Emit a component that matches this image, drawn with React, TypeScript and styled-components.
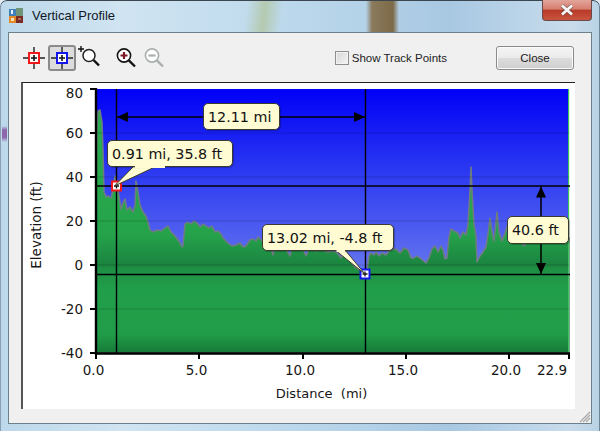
import React from "react";
import styled, { createGlobalStyle } from "styled-components";

const Global = createGlobalStyle`
  html, body { margin: 0; padding: 0; background: #dfeaf3; }
  #root { width: 600px; height: 431px; overflow: hidden; }
`;

const Frame = styled.div`
  position: relative;
  width: 600px;
  height: 431px;
  box-sizing: border-box;
  display: flex;
  flex-direction: column;
  padding: 0 8px 7px 8px;
  border-radius: 7px 7px 0 0;
  box-shadow: inset 0 1px 0 #3b4650, inset 1px 0 0 #8aa0b0, inset -1px 0 0 #6f8596;
  background:
    linear-gradient(transparent, #8d66ac 25%, #8d66ac 70%, transparent) 2px 126px / 5px 16px no-repeat,
    linear-gradient(97deg, transparent 41%, rgba(175, 195, 150, 0.7) 44%, transparent 47%) 0 0 / 100% 32px no-repeat,
    linear-gradient(90deg, transparent 61%, #8a7a5c 62%, #7d6a48 65.5%, transparent 66.5%) 0 0 / 100% 32px no-repeat,
    linear-gradient(90deg, #bcd8ea 0%, #d0e4f2 20%, #c2dcee 40%, #b4d2e8 60%, #a8c8e2 75%, #c8dcec 95%, #b8d2e4 100%);
`;

const TitleBar = styled.div`
  height: 32px;
  flex: none;
  display: flex;
  align-items: center;
  gap: 9px;
  padding: 0 0 1px 1px;
  box-sizing: border-box;
  font: 13px "Liberation Sans", Arial, sans-serif;
  color: #10181f;
`;

const CloseCaption = styled.div`
  position: absolute;
  top: 0;
  right: 8px;
  width: 50px;
  height: 21px;
  box-sizing: border-box;
  border: 1px solid #6a4a48;
  border-top: none;
  border-radius: 0 0 4px 4px;
  display: flex;
  align-items: center;
  justify-content: center;
  background: linear-gradient(#e2a59a 0%, #d67f70 45%, #b83a28 52%, #c9553f 100%);
`;

const Client = styled.div`
  flex: 1;
  min-height: 0;
  position: relative;
  display: flex;
  flex-direction: column;
  background: #f0f0f0;
  border: 1px solid #6e7f8c;
  box-sizing: border-box;
  padding: 0 16px 14px 12px;
`;

const Toolbar = styled.div`
  height: 49px;
  flex: none;
  display: flex;
  align-items: center;
  padding-top: 1px;
  box-sizing: border-box;
`;

const ToolGroup = styled.div<{ $gap?: number }>`
  display: flex;
  align-items: center;
  margin-left: -1px;
  margin-right: ${(p) => p.$gap ?? 0}px;
`;

const ToolButton = styled.div<{ $active?: boolean }>`
  width: 28px;
  height: 26px;
  box-sizing: border-box;
  display: flex;
  align-items: center;
  justify-content: center;
  border-radius: 3px;
  border: 2px solid ${(p) => (p.$active ? "#8b8b8b" : "transparent")};
  background: ${(p) => (p.$active ? "#dcdcdc" : "transparent")};
`;

const CheckLabel = styled.label`
  margin-left: auto;
  display: flex;
  align-items: center;
  gap: 3px;
  font: 11.5px "Liberation Sans", Arial, sans-serif;
  color: #222;
`;

const CheckBox = styled.span`
  width: 14px;
  height: 14px;
  box-sizing: border-box;
  border: 1px solid #8e8f8f;
  background: linear-gradient(135deg, #d6d6d6, #f4f4f4);
  box-shadow: inset 0 0 0 1px #f2f2f2;
`;

const CloseButton = styled.button`
  margin-left: 49px;
  margin-right: 1px;
  width: 78px;
  height: 24px;
  padding: 0;
  border: 1px solid #8a8a8a;
  border-radius: 3px;
  background: linear-gradient(#f4f4f4 0%, #ebebeb 48%, #dcdcdc 52%, #cfcfcf 100%);
  box-shadow: inset 0 0 0 1px #fbfbfb;
  font: 11.5px "Liberation Sans", Arial, sans-serif;
  color: #1a1a1a;
`;

const ChartPanel = styled.div`
  flex: 1;
  position: relative;
  min-height: 0;
  background: #fff;
  border-top: 1px solid #222;
  border-left: 2px solid #555;
`;

const ChartSvg = styled.svg`
  display: block;
  width: 100%;
  height: 100%;
`;

const Callout = styled.div<{ $left: number; $top: number; $width: number; $height: number }>`
  position: absolute;
  left: ${(p) => p.$left}px;
  top: ${(p) => p.$top}px;
  width: ${(p) => p.$width}px;
  height: ${(p) => p.$height}px;
  box-sizing: border-box;
  display: flex;
  align-items: center;
  padding-left: 4px;
  background: #fffbd2;
  border: 1px solid #3a3a30;
  border-radius: 5px;
  box-shadow: 1px 1px 1px rgba(0, 0, 0, 0.25);
  font: 14.3px "DejaVu Sans", Verdana, sans-serif;
  color: #111;
  white-space: nowrap;
`;

const Tail = styled.svg<{ $left: number; $top: number }>`
  position: absolute;
  left: ${(p) => p.$left}px;
  top: ${(p) => p.$top}px;
  overflow: visible;
`;

const Grip = styled.svg`
  position: absolute;
  right: 0;
  bottom: 0;
`;

const AppIcon = () => (
  <svg width="14" height="15" viewBox="0 0 14 15">
    <rect x="0" y="1" width="7" height="7" fill="#3f7fb8" />
    <rect x="2" y="2" width="2" height="4" fill="#e8f0f8" />
    <rect x="7" y="0" width="7" height="8" fill="#6f9478" />
    <rect x="0" y="8" width="7" height="7" fill="#e08a2c" />
    <rect x="2" y="10" width="3" height="3" fill="#f6e0b0" />
    <rect x="7" y="8" width="7" height="7" fill="#7c2a24" />
    <rect x="9" y="10" width="3" height="2" fill="#b06a5a" />
  </svg>
);

const Crosshair = ({ color }: { color: string }) => (
  <svg width="22" height="22" viewBox="0 0 22 22">
    <path d="M0 11h6M16 11h6M11 0v6M11 16v6" stroke="#222" strokeWidth="1.4" />
    <rect x="6" y="6" width="10" height="10" fill="#fff" stroke={color} strokeWidth="2" />
    <path d="M8 11h6M11 8v6" stroke="#111" strokeWidth="1.6" />
  </svg>
);

const ZoomRect = () => (
  <svg width="24" height="24" viewBox="0 0 24 24">
    <path d="M3 0v6M0 3h6" stroke="#111" strokeWidth="1.4" />
    <circle cx="11" cy="9.5" r="6" fill="#fff" stroke="#222" strokeWidth="1.5" />
    <path d="M15.5 14L21 19.5" stroke="#111" strokeWidth="2.4" />
  </svg>
);

const Magnifier = ({ plus, disabled }: { plus?: boolean; disabled?: boolean }) => {
  const c = disabled ? "#a9b0ac" : "#151515";
  const m = disabled ? "#a9b0ac" : "#7a1626";
  return (
    <svg width="24" height="24" viewBox="0 0 24 24">
      <circle cx="10" cy="9.5" r="6.6" fill="#fff" stroke={c} strokeWidth="1.6" />
      <path d="M14.8 14.3L21 20.5" stroke={c} strokeWidth="2.4" />
      <path d={plus ? "M6.5 9.5h7M10 6v7" : "M6.5 9.5h7"} stroke={m} strokeWidth="2.2" />
    </svg>
  );
};

const profile: [number, number][] = [
  [96, 353], [96, 200], [97, 125], [98, 111], [100, 110], [102, 122], [103, 150], [104, 192], [106, 197], [108, 196],
  [111, 198], [113, 190], [115, 176], [117, 186], [119, 196], [121, 209], [123, 203], [125, 199], [127, 210], [130, 207],
  [133, 212], [135, 205], [136, 181], [138, 192], [140, 205], [143, 212], [146, 216], [148, 222], [150, 230], [153, 232],
  [157, 230], [161, 231], [165, 228], [168, 226], [171, 232], [175, 236], [178, 240], [180, 243], [182, 247], [183, 246],
  [185, 224], [188, 222], [191, 224], [194, 221], [197, 223], [200, 227], [203, 224], [206, 226], [209, 228], [212, 226],
  [215, 232], [218, 231], [221, 234], [223, 238], [226, 241], [229, 244], [232, 246], [236, 245], [240, 243], [243, 247],
  [246, 246], [250, 240], [253, 239], [256, 241], [258, 237], [262, 241], [266, 244], [270, 246], [273, 255], [275, 246],
  [280, 247], [285, 248], [290, 256], [292, 248], [298, 250], [303, 249], [306, 256], [309, 249], [315, 251], [322, 250],
  [328, 252], [334, 251], [338, 254], [341, 258], [344, 252], [349, 258], [352, 263], [355, 267], [358, 269], [362, 271],
  [367, 272], [369, 256], [371, 253], [374, 255], [376, 252], [379, 256], [382, 253], [386, 255], [390, 250], [396, 249],
  [400, 253], [404, 248], [408, 250], [411, 258], [414, 258], [417, 256], [421, 259], [426, 263], [429, 258], [432, 249],
  [435, 246], [438, 252], [441, 246], [443, 250], [445, 259], [447, 258], [449, 237], [451, 229], [454, 231], [458, 233],
  [460, 238], [463, 232], [466, 235], [468, 225], [470, 190], [471, 167], [472, 190], [474, 224], [476, 236], [477, 262],
  [480, 256], [483, 252], [486, 247], [488, 234], [490, 218], [492, 232], [494, 241], [496, 222], [497, 212], [499, 232],
  [502, 241], [505, 233], [508, 224], [511, 232], [514, 240], [517, 232], [520, 240], [524, 246], [528, 240], [533, 238],
  [540, 240], [548, 236], [556, 240], [562, 236], [569, 238], [569, 353],
];
const areaPath = "M" + profile.map(([x, y]) => `${x} ${y}`).join("L") + "Z";

const yTicks = [80, 60, 40, 20, 0, -20, -40];
const yPos = (v: number) => 265 - v * 2.2;
const xTicks: [string, number, number][] = [
  ["0.0", 96, 93.5], ["5.0", 199, 196.5], ["10.0", 303, 300], ["15.0", 406, 403], ["20.0", 509, 506], ["22.9", 569, 552],
];

const ChartText = ({ x, y, anchor, children, size = 13.5 }: { x: number; y: number; anchor: "start" | "middle" | "end"; children: React.ReactNode; size?: number }) => (
  <text x={x} y={y} textAnchor={anchor} fontFamily='"DejaVu Sans", Verdana, sans-serif' fontSize={size} fill="#161616">
    {children}
  </text>
);

const Marker = ({ x, y, color }: { x: number; y: number; color: string }) => (
  <g>
    <rect x={x - 4.5} y={y - 4.5} width="9" height="9" fill="#fff" stroke={color} strokeWidth="2" />
    <path d={`M${x - 2.5} ${y}h5M${x} ${y - 2.5}v5`} stroke="#111" strokeWidth="1.3" />
  </g>
);

const Chart = () => (
  <ChartSvg viewBox="23 83 552 326">
    <defs>
      <linearGradient id="sky" x1="0" y1="89" x2="0" y2="265" gradientUnits="userSpaceOnUse">
        <stop offset="0" stopColor="#0000f6" />
        <stop offset="0.45" stopColor="#2a37f2" />
        <stop offset="1" stopColor="#6172ee" />
      </linearGradient>
      <linearGradient id="ground" x1="0" y1="89" x2="0" y2="353" gradientUnits="userSpaceOnUse">
        <stop offset="0" stopColor="#2cae50" />
        <stop offset="0.55" stopColor="#25a34b" />
        <stop offset="0.665" stopColor="#1b8440" />
        <stop offset="0.68" stopColor="#1e8f43" />
        <stop offset="0.76" stopColor="#229f4a" />
        <stop offset="0.93" stopColor="#219c48" />
        <stop offset="1" stopColor="#157a38" />
      </linearGradient>
    </defs>
    <rect x="96" y="89" width="473" height="264" fill="url(#sky)" />
    <path d={areaPath} fill="url(#ground)" stroke="#6f7d80" strokeWidth="1.5" strokeLinejoin="round" />
    <rect x="568" y="89" width="1.2" height="264" fill="#3fc25e" />
    {[133, 177, 221, 265, 309].map((y) => (
      <path key={y} d={`M96 ${y}H569`} stroke="#000" strokeOpacity="0.17" />
    ))}
    <path d="M96 88V354.5M96 353.5H570" stroke="#000" strokeWidth="2.4" />
    {yTicks.map((v) => (
      <g key={v}>
        <path d={`M90 ${yPos(v)}H96`} stroke="#000" strokeWidth="2" />
        <ChartText x={83} y={yPos(v) + (v === 80 ? 9 : 5)} anchor="end">{v}</ChartText>
      </g>
    ))}
    {xTicks.map(([label, x, labelX]) => (
      <g key={label}>
        <path d={`M${x} 353V359`} stroke="#000" strokeWidth="2" />
        <ChartText x={labelX} y={375} anchor="middle">{label}</ChartText>
      </g>
    ))}
    <ChartText x={321.5} y={398} anchor="middle" size={13}>Distance{"\u00a0\u00a0"}(mi)</ChartText>
    <g transform="translate(41 225) rotate(-90)">
      <ChartText x={0} y={0} anchor="middle" size={13.5}>Elevation (ft)</ChartText>
    </g>
    <path d="M116.5 89V353M365.5 89V353M96 186H570M96 274.5H570" stroke="#000" strokeWidth="1.4" />
    <path d="M116 117H365M541 186V274" stroke="#000" strokeWidth="1.5" />
    <path d="M117 117l11-5v10zM365 117l-11-5v10zM541 186.5l-5 11h10zM541 274l-5-11h10z" fill="#000" />
    <Marker x={116.5} y={186} color="#f01818" />
    <Marker x={365} y={274} color="#1414f0" />
  </ChartSvg>
);

const callouts = [
  { left: 180, top: 20, width: 77, height: 27, text: "12.11 mi" },
  { left: 84, top: 57, width: 126, height: 27, text: "0.91 mi, 35.8 ft" },
  { left: 239, top: 141, width: 132, height: 27, text: "13.02 mi, -4.8 ft" },
  { left: 484, top: 133, width: 62, height: 28, text: "40.6 ft" },
];

export default function App() {
  return (
    <>
      <Global />
      <Frame>
        <TitleBar>
          <AppIcon />
          <span>Vertical Profile</span>
        </TitleBar>
        <CloseCaption>
          <svg width="14" height="12" viewBox="0 0 14 12">
            <path d="M2 1.5L12 10.5M12 1.5L2 10.5" stroke="#5a5050" strokeOpacity="0.55" strokeWidth="4.4" />
            <path d="M2 1.5L12 10.5M12 1.5L2 10.5" stroke="#f8f8f8" strokeWidth="2.6" />
          </svg>
        </CloseCaption>
        <Client>
          <Toolbar>
            <ToolGroup $gap={9}>
              <ToolButton><Crosshair color="#f01818" /></ToolButton>
              <ToolButton $active><Crosshair color="#1414f0" /></ToolButton>
              <ToolButton><ZoomRect /></ToolButton>
            </ToolGroup>
            <ToolGroup>
              <ToolButton><Magnifier plus /></ToolButton>
              <ToolButton><Magnifier disabled /></ToolButton>
            </ToolGroup>
            <CheckLabel>
              <CheckBox />
              Show Track Points
            </CheckLabel>
            <CloseButton>Close</CloseButton>
          </Toolbar>
          <ChartPanel>
            <Chart />
            <Tail $left={92} $top={83} width="50" height="22">
              <path d="M19 0L-0.5 20L42 0" fill="#fffbd2" stroke="#3a3a30" />
            </Tail>
            <Tail $left={312} $top={167} width="30" height="26">
              <path d="M0 0L30 24L10 0" fill="#fffbd2" stroke="#3a3a30" />
            </Tail>
            {callouts.map((c) => (
              <Callout key={c.text} $left={c.left} $top={c.top} $width={c.width} $height={c.height}>
                {c.text}
              </Callout>
            ))}
            <Tail $left={111} $top={82} width="32" height="3">
              <path d="M1 0H31V3H1z" fill="#fffbd2" />
            </Tail>
            <Tail $left={312.5} $top={165} width="10" height="4">
              <path d="M0.5 0H9V4H0.5z" fill="#fffbd2" />
            </Tail>
          </ChartPanel>
          <Grip width="13" height="13" viewBox="0 0 13 13">
            <path d="M12 2L2 12M12 5L5 12M12 8L8 12" stroke="#a8a8a8" strokeWidth="1.2" />
          </Grip>
        </Client>
      </Frame>
    </>
  );
}
